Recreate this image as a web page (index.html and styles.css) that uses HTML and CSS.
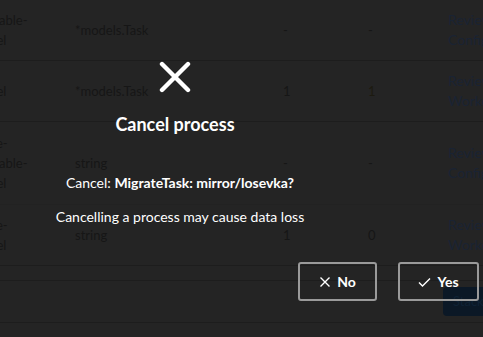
FILE: index.html
```html
<!DOCTYPE html>
<html>
<head>
<meta charset="utf-8">
<link rel="stylesheet" href="styles.css">
</head>
<body>
<div class="page">
  <div class="table">
    <div class="row r1">
      <div class="c1">non-stable-<br>channel</div>
      <div class="c2">*models.Task</div>
      <div class="c3">-</div>
      <div class="c4">-</div>
      <div class="c5"><span class="link">Review</span><br><span class="link">Config</span></div>
    </div>
    <div class="row r2">
      <div class="c1">channel</div>
      <div class="c2">*models.Task</div>
      <div class="c3">1</div>
      <div class="c4 amber">1</div>
      <div class="c5"><span class="link">Review</span><br><span class="link">Worker</span></div>
    </div>
    <div class="row r3">
      <div class="c1">remote-<br>non-stable-<br>channel</div>
      <div class="c2">string</div>
      <div class="c3">-</div>
      <div class="c4">-</div>
      <div class="c5"><span class="link">Review</span><br><span class="link">Config</span></div>
    </div>
    <div class="row r4">
      <div class="c1">remote-<br>channel</div>
      <div class="c2">string</div>
      <div class="c3">1</div>
      <div class="c4">0</div>
      <div class="c5"><span class="link">Review</span><br><span class="link">Worker</span></div>
    </div>
    <div class="row r5"></div>
    <div class="row r6"><span class="stack">Stacktrace</span></div>
  </div>
</div>
<div class="dimmer">
  <div class="modal">
    <div class="header">
      <svg class="xicon" width="32" height="32" viewBox="0 0 32 32"><path d="M3 3 L29 29 M29 3 L3 29" stroke="#fff" stroke-width="4.4" stroke-linecap="round" fill="none"/></svg>
      <div class="title">Cancel process</div>
    </div>
    <div class="content">
      <p class="q">Cancel: <b>MigrateTask: mirror/losevka?</b></p>
      <p class="warn">Cancelling a process may cause data loss</p>
    </div>
    <div class="actions">
      <button class="btn"><svg width="12" height="12" viewBox="0 0 12 12"><path d="M1.5 1.5 L10.5 10.5 M10.5 1.5 L1.5 10.5" stroke="#fff" stroke-width="1.4" fill="none"/></svg>No</button>
      <button class="btn"><svg width="13" height="12" viewBox="0 0 13 12"><path d="M1 6.5 L4.5 10 L12 2.5" stroke="#fff" stroke-width="1.4" fill="none"/></svg>Yes</button>
    </div>
  </div>
</div>
</body>
</html>
```
FILE: styles.css
```css
html, body {
  margin: 0;
  padding: 0;
  background: #242424;
  width: 483px;
  height: 337px;
  overflow: hidden;
  font-family: Lato, "Noto Sans", sans-serif;
}
.page {
  position: relative;
}
.table {
  margin-left: -38px;
  font-size: 13px;
  line-height: 20px;
  color: #161616;
}
.row {
  display: grid;
  grid-template-columns: 113px 208px 85px 80px 120px;
  align-items: center;
  border-bottom: 1px solid #1d1d1d;
}
.r1 { height: 60px; }
.r2 { height: 60px; }
.r3 { height: 82px; border-bottom-color: #222; }
.r4 { height: 60px; }
.r5 { height: 14px; }
.r6 {
  height: 41px;
  display: flex;
  justify-content: flex-end;
  align-items: center;
}
.c3 { padding-left: 0; }
.c4 { padding-left: 0; }
.c5 { font-size: 14px; }
.link { color: #1a2333; }
.amber { color: #1c1a10; }
.stack {
  background: #0b1826;
  color: #0f2235;
  font-size: 13px;
  line-height: 19px;
  padding: 5px 10px;
  border-radius: 4px;
  margin-right: -40px;
  width: 60px;
}
.dimmer {
  position: absolute;
  left: 0;
  top: 0;
  width: 483px;
  height: 337px;
}
.modal {
  color: #fff;
  padding-top: 61px;
}
.header {
  width: 350px;
  display: flex;
  flex-direction: column;
  align-items: center;
}
.xicon { display: block; }
.title {
  font-size: 18px;
  font-weight: bold;
  margin-top: 19px;
  line-height: 24px;
}
.content {
  width: 360px;
  text-align: center;
  font-size: 14px;
  line-height: 20px;
  padding-top: 37px;
}
.content p { margin: 0; }
.content .warn { margin-top: 14px; }
.actions {
  display: flex;
  justify-content: flex-end;
  gap: 21px;
  padding-right: 4px;
  margin-top: 35px;
}
.btn {
  background: transparent;
  border: 2px solid #9a9a9a;
  border-radius: 3px;
  color: #fff;
  font-family: inherit;
  font-size: 14px;
  font-weight: bold;
  height: 39px;
  display: flex;
  align-items: center;
  justify-content: center;
  gap: 6px;
  padding: 0;
}
.btn:first-child { width: 79px; }
.btn:last-child { width: 81px; }
```
